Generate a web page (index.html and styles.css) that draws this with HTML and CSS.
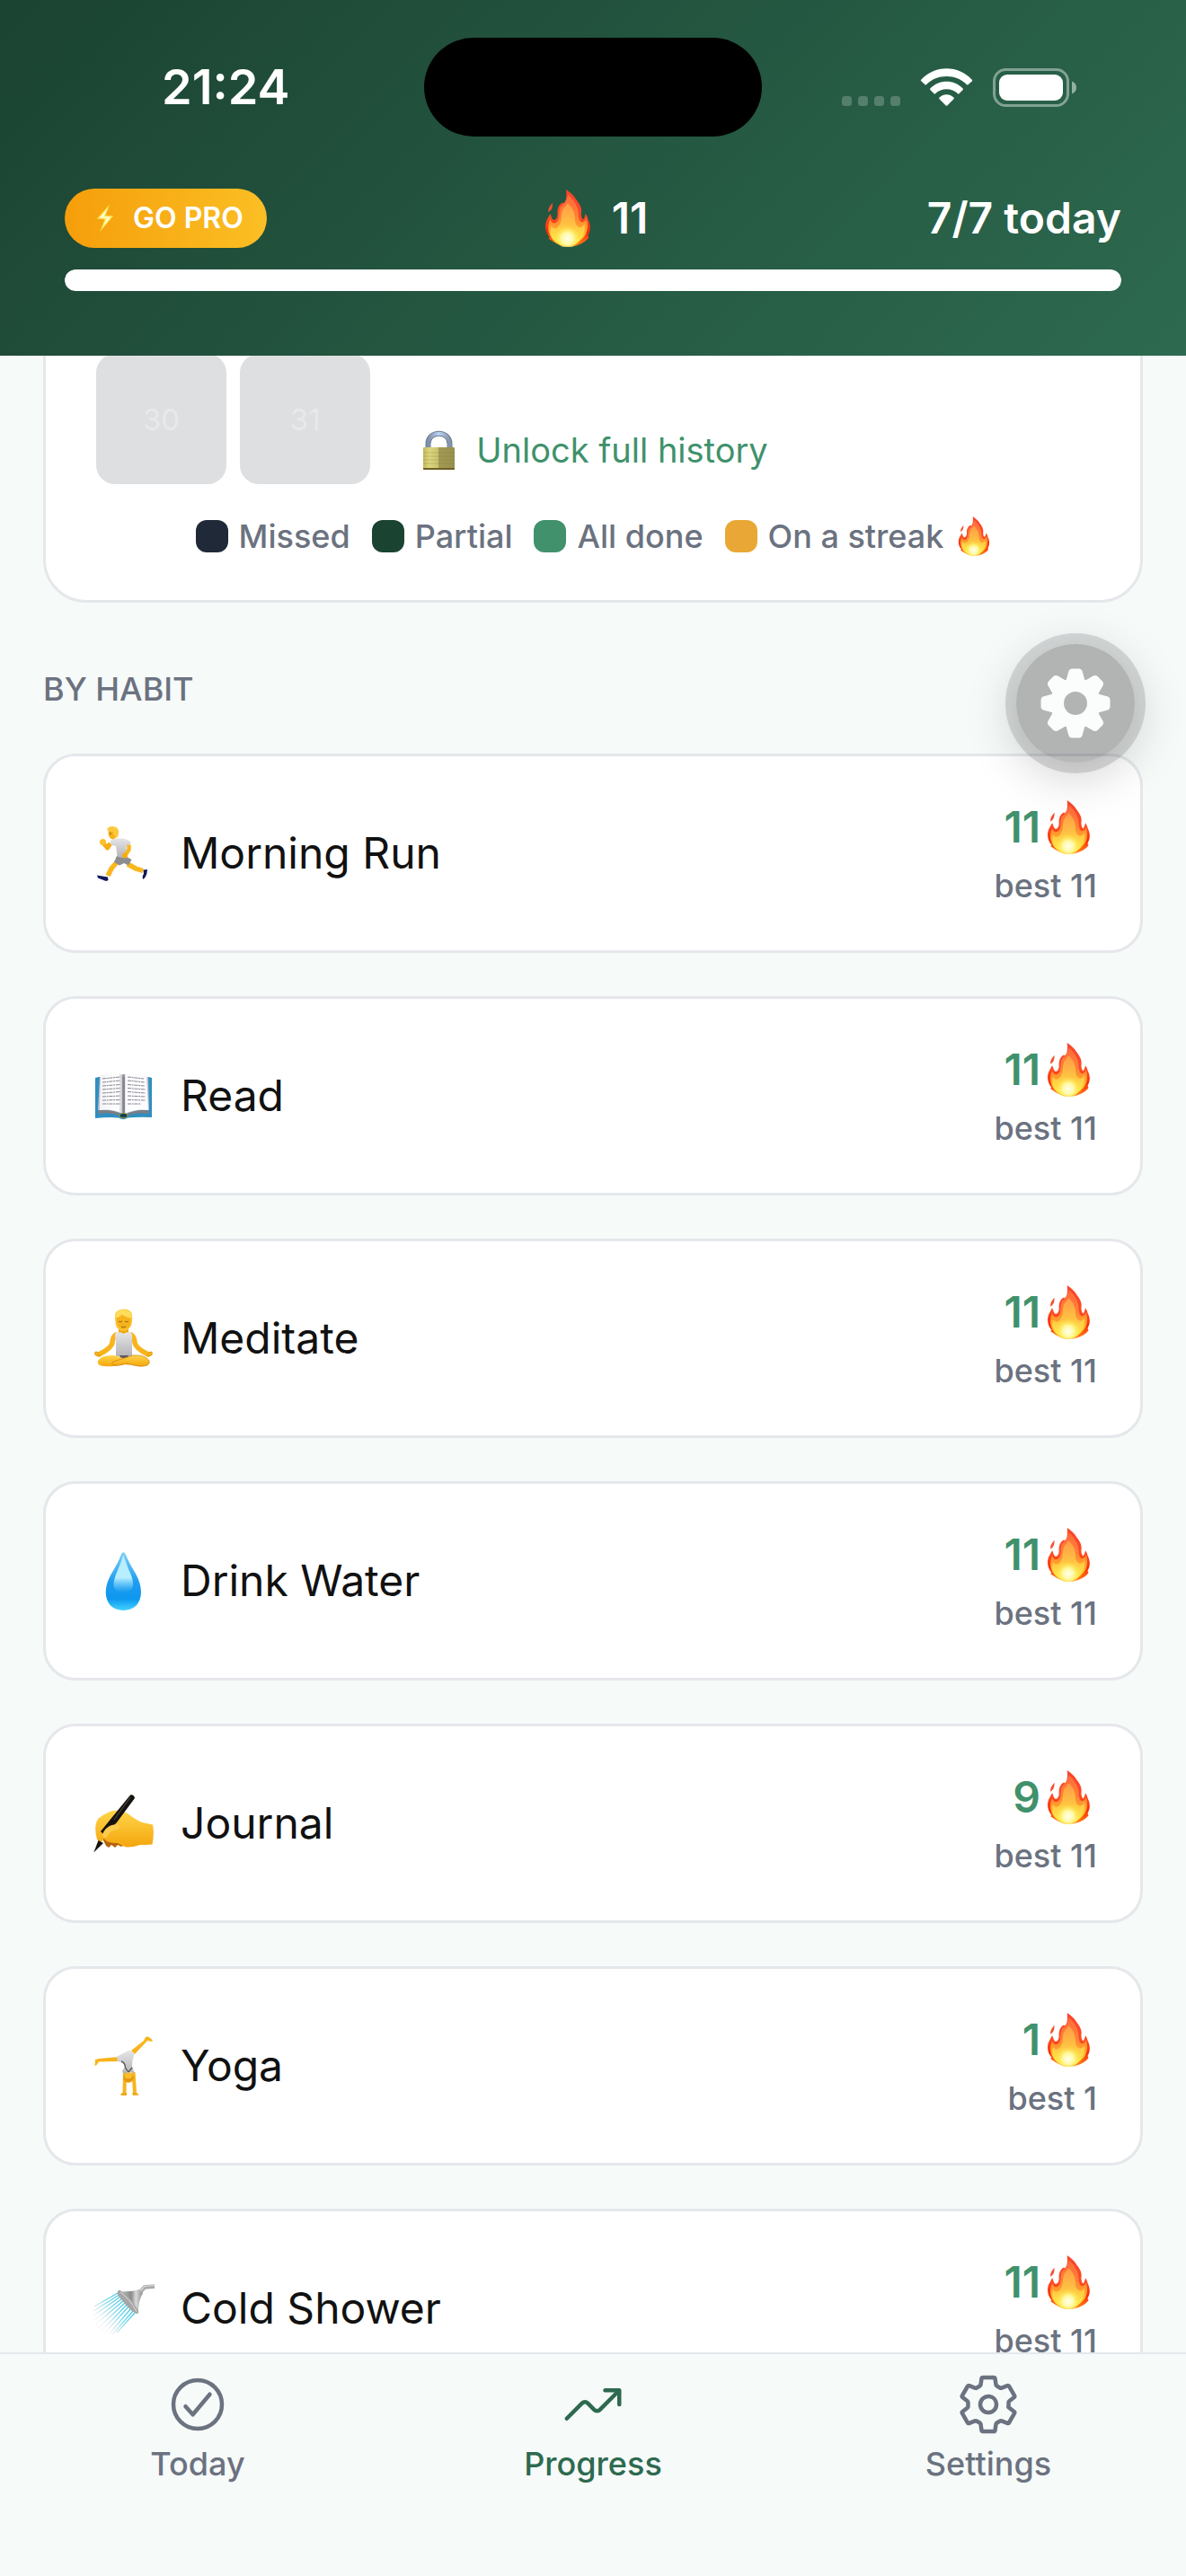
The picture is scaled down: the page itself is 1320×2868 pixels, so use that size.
FILE: index.html
```html
<!DOCTYPE html>
<html lang="en">
<head>
<meta charset="utf-8">
<meta name="viewport" content="width=device-width, initial-scale=1">
<title>Progress</title>
<link rel="stylesheet" href="styles.css">
</head>
<body>
<svg class="sprite" width="0" height="0" aria-hidden="true">
  <defs>
    <linearGradient id="flame-red" x1="0" y1="0" x2="0" y2="1">
      <stop offset="0" stop-color="#f8452c"/><stop offset=".5" stop-color="#ff4a22"/><stop offset=".75" stop-color="#fb2c08"/><stop offset="1" stop-color="#ff8a1c"/>
    </linearGradient>
    <linearGradient id="flame-orange" x1="0" y1="0" x2="0" y2="1">
      <stop offset="0" stop-color="#ff6a3d"/><stop offset=".4" stop-color="#ff7f38"/><stop offset=".65" stop-color="#ffa02a"/><stop offset="1" stop-color="#ffe52a"/>
    </linearGradient>
    <linearGradient id="flame-inner" x1="0" y1="0" x2="0" y2="1">
      <stop offset="0" stop-color="#ff9a45"/><stop offset=".5" stop-color="#ffc043"/><stop offset="1" stop-color="#fff04a"/>
    </linearGradient>
    <radialGradient id="flame-core" cx=".5" cy=".65" r=".5">
      <stop offset="0" stop-color="#fffef0"/><stop offset=".45" stop-color="#fff9a0"/><stop offset="1" stop-color="#ffe330" stop-opacity="0"/>
    </radialGradient>
    <symbol id="flame" viewBox="0 0 47 60">
      <path fill="url(#flame-red)" d="M21.700 0C26 3 30 6 32 10C35 14 38 18 37.600 23C37 27 38 30 39.300 31.500C41 30 41.500 27.500 42 25.300C44 27.500 44 29.500 45 32C47.500 37 47.500 43 44.500 48L45.500 50C43 54 37 57.500 31 59C25 60.500 18 60 12.500 57L8 54.500L3 51L4.500 50C1 46 -.5 41 .2 36C.8 31.500 3.500 29 5 25.300C6.500 27 6.200 30 8 31.500C11 33 12.500 29 12.700 26C12 20 14 16 17.300 13.700L19.500 14C22.500 11 22.200 5 21.700 0Z"/>
      <path fill="#f4502f" d="M7.700 13.700C7.200 17.500 8 20 3.300 23.700C2.600 19.500 5 16.500 7.700 13.700Z"/>
      <path fill="url(#flame-orange)" d="M23.500 5C30 11 34.500 18 34.500 25C34.500 31 36.500 35 39.500 34C41.500 33 42.500 31 42.800 30C45 37 45 46 38 52C33 57 28 59 22.500 59C16 59 9 56 5.500 49C2.500 44 2.200 38 5 31C6.500 35 9 36.500 12 34C16 30 13.500 24 15.500 19C17 15.500 22.500 14 23.500 5Z"/>
      <path fill="url(#flame-inner)" d="M23 14C29 19 31 25 31 31C31 36 33 40 37 39.500C39 39 40 37 41 36C42 44 39 51 33 55Q22 60 12 55C6 51 4 45 6 38C8 41 11 42 14 38C18 33 16 27 18 22C19 18 22 18 23 14Z"/>
      <ellipse cx="23" cy="47" rx="14" ry="14" fill="url(#flame-core)"/>
    </symbol>
    <linearGradient id="skin" x1="0" y1="0" x2="0" y2="1">
      <stop offset="0" stop-color="#ffd54a"/><stop offset="1" stop-color="#f4a60d"/>
    </linearGradient>
    <linearGradient id="shirt" x1="0" y1="0" x2="0" y2="1">
      <stop offset="0" stop-color="#e6e6e8"/><stop offset="1" stop-color="#b4b4b8"/>
    </linearGradient>
    <linearGradient id="page" x1="0" y1="0" x2="1" y2="0">
      <stop offset="0" stop-color="#f4f4f8"/><stop offset=".8" stop-color="#ffffff"/><stop offset="1" stop-color="#b9bac2"/>
    </linearGradient>
    <linearGradient id="drop" x1="0" y1="0" x2="0" y2="1">
      <stop offset="0" stop-color="#7fd0f5"/><stop offset=".5" stop-color="#1f9df0"/><stop offset=".8" stop-color="#0d97ee"/><stop offset="1" stop-color="#45d3ff"/>
    </linearGradient>
    <linearGradient id="drop-shine" x1="0" y1="0" x2="0" y2="1">
      <stop offset="0" stop-color="#b5ecff"/><stop offset=".6" stop-color="#b9efff"/><stop offset="1" stop-color="#7fd4fb" stop-opacity="0"/>
    </linearGradient>
    <linearGradient id="metal" x1="0" y1="0" x2="1" y2="0">
      <stop offset="0" stop-color="#c9c9c9"/><stop offset=".5" stop-color="#8a8a8a"/><stop offset=".7" stop-color="#dadada"/><stop offset="1" stop-color="#8f8f8f"/>
    </linearGradient>
    <linearGradient id="spray" gradientUnits="userSpaceOnUse" x1="38" y1="27" x2="10" y2="52">
      <stop offset="0" stop-color="#3cc4e0"/><stop offset=".5" stop-color="#84dced"/><stop offset="1" stop-color="#c8ccd0" stop-opacity=".15"/>
    </linearGradient>
    <linearGradient id="brass" x1="0" y1="0" x2="1" y2="0">
      <stop offset="0" stop-color="#c2b85a"/><stop offset=".2" stop-color="#dcd680"/><stop offset=".49" stop-color="#c9c26c"/><stop offset=".5" stop-color="#a39b55"/><stop offset="1" stop-color="#98904c"/>
    </linearGradient>
    <linearGradient id="shackle" x1="0" y1="0" x2="1" y2="0">
      <stop offset="0" stop-color="#7d8fa8"/><stop offset=".5" stop-color="#b9d4f5"/><stop offset="1" stop-color="#8394ab"/>
    </linearGradient>
  </defs>
</svg>

<header class="app-header">
  <div class="status-bar">
    <time class="clock">21:24</time>
    <div class="island"></div>
    <svg class="status-icons" viewBox="0 0 261 43" aria-hidden="true">
      <g fill="#fff" fill-opacity=".22">
        <rect x="0" y="31" width="11" height="11" rx="3.500"/><rect x="18" y="31" width="11" height="11" rx="3.500"/><rect x="36" y="31" width="11" height="11" rx="3.500"/><rect x="54" y="31" width="11" height="11" rx="3.500"/>
      </g>
      <g fill="#fff">
        <path d="M88 13C103-4 130-4 145 13Q145.500 13.700 145 14.300L140.500 18.300Q139.800 18.800 139 18.200C127 6 106 6 94 18.200Q93.200 18.800 92.500 18.300L88.300 14.300Q87.500 13.700 88 13Z"/>
        <path d="M98.300 22.500C108 12 125 12 134.700 22.500Q135.300 23.300 134.700 24L130.500 28.300Q129.700 29 129 28.300C122 21.500 111 21.500 104 28.300Q103.300 29 102.500 28.300L98.300 24Q97.700 23.300 98.300 22.500Z"/>
        <path d="M108.500 32.500C113 28 120 28 124.500 32.500Q125.300 33.300 124.500 34.200L117.300 41.500Q116.500 42.200 115.700 41.500L108.500 34.200Q107.700 33.300 108.500 32.500Z"/>
        <rect x="175" y="7" width="71" height="29" rx="9"/>
      </g>
      <rect x="169.500" y="1.500" width="82" height="40" rx="13" fill="none" stroke="#fff" stroke-opacity=".42" stroke-width="3"/>
      <path d="M256 14.500Q261 16.500 261 21.500T256 28.500Z" fill="#fff" fill-opacity=".5"/>
    </svg>
  </div>
  <div class="stats">
    <button class="go-pro" type="button">
      <svg class="bolt" viewBox="0 0 22 36" aria-hidden="true"><path fill="#ffe14a" stroke="#ef9a0c" stroke-width="1" stroke-opacity=".6" d="M17 1L1 19L10 19.500L4 35L21 15L12 14.500Z"/><path fill="#fffbd0" d="M14.500 6L4.500 17.500L12.500 18L8.500 28L17.500 16.500L9.500 16Z"/></svg>
      <span>GO PRO</span>
    </button>
    <p class="streak-total"><svg class="flame-lg" role="img" aria-label="Streak"><use href="#flame"/></svg><span>11</span></p>
    <p class="today-count">7/7 today</p>
  </div>
  <progress class="day-progress" value="7" max="7" aria-label="Habits done today"></progress>
</header>

<main class="content">
  <section class="calendar-card">
    <div class="calendar">
      <span class="day">30</span>
      <span class="day">31</span>
      <button class="unlock" type="button">
        <svg class="lock" viewBox="0 0 35 43" aria-hidden="true"><path fill="none" stroke="#6f7c90" stroke-width="6" d="M5.500 20V14C5.500-1 29.500-1 29.500 14V20"/><path fill="none" stroke="url(#shackle)" stroke-width="4" d="M5.500 20V14C5.500-1 29.500-1 29.500 14V20"/><rect y="18" width="35" height="25" rx="1" fill="url(#brass)"/><path stroke="#837a38" stroke-width=".6" opacity=".5" d="M0 24H35M0 28H35M0 32H35M0 36H35"/><path fill="#6d6026" d="M0 41H35V42Q35 43 34 43H1Q0 43 0 42Z"/></svg>
        <span>Unlock full history</span>
      </button>
    </div>
    <ul class="legend">
      <li><i class="swatch missed"></i>Missed</li>
      <li><i class="swatch partial"></i>Partial</li>
      <li><i class="swatch done"></i>All done</li>
      <li><i class="swatch streak"></i>On a streak <svg class="flame-sm" aria-hidden="true"><use href="#flame"/></svg></li>
    </ul>
  </section>

  <h2 class="section-title">BY HABIT</h2>

  <ul class="habits">
    <li class="habit">
      <svg class="emoji" viewBox="0 0 66 66" aria-hidden="true">
        <path fill="none" stroke="#f6ae16" stroke-width="5" stroke-linejoin="round" d="M18 22L14.500 27L9.500 21"/>
        <circle cx="9.500" cy="20.500" r="3.500" fill="#fbc02d"/>
        <path fill="none" stroke="#f9b71d" stroke-width="5.500" d="M25 43L19 50L15 58M37 45L46 50L54 52.500"/>
        <path fill="#111a5c" d="M3 57.500L15 59.500L15.500 63L13 64L4 60.500ZM54.500 51.500L59 51Q59 56 56.500 60L54 62Q53 58 55 56Z"/>
        <path fill="#8d8d91" d="M25 36L36 37L41.500 40L38 46.500L33 44L28 46.500L22 43Z"/>
        <path fill="url(#shirt)" d="M17.500 19L24 16.500Q34 15 41 20.500L38 26L35.500 25L36 37Q30 39 25.500 36.500L24 25L19 24Z"/>
        <path fill="none" stroke="#f9b71d" stroke-width="4.500" stroke-linejoin="round" d="M38.500 23.500L38.500 29L34.500 35"/>
        <circle cx="34" cy="35.500" r="3" fill="#f5ab12"/>
        <path fill="#f7b01a" d="M15.500 8Q15 16 20 17.500Q24 17.500 24.500 12L22 6Z"/>
        <path fill="#fbc940" d="M14 7Q15 2.500 21 3Q28 4 27 11Q26.500 15 24.500 16Q23.500 13 21.500 12.500L21 9Q17 9.500 14 7Z"/>
        <circle cx="18" cy="11" r=".8" fill="#6b4a10"/>
      </svg>
      <span class="habit-name">Morning Run</span>
      <div class="habit-score"><strong>11<svg class="flame-md" role="img" aria-label="day streak"><use href="#flame"/></svg></strong><small>best 11</small></div>
    </li>
    <li class="habit">
      <svg class="emoji" viewBox="0 0 66 66" aria-hidden="true">
        <path fill="#2f8fc0" d="M1 13L5 12H60L64 13V57Q48 56.500 37 57.500Q32.500 61 27 57.500Q16 56.500 1 58Z"/>
        <path fill="#7d7d84" d="M4 50Q18 46 28 53L32.500 55L37 53Q48 47 61 50V53Q46 51 38 55H27Q18 51 4 53Z"/>
        <path fill="#c3c4cb" d="M4 49L6 12H60L61 49Q46 48 33 54Q20 48 4 49Z"/>
        <path fill="url(#page)" d="M7 10Q20 6.500 28 8.500L32 10V53Q20 47 6 49Z"/>
        <path fill="#fcfcff" d="M34 10Q40 6.500 58 10L60 49Q46 47 34 53Z"/>
        <path stroke="#5d5d66" stroke-width="3" opacity=".6" d="M32.700 9V53"/>
        <g stroke="#85858e" stroke-width="1" stroke-dasharray="4 .7 2 .7"><path d="M9 14L29 12M9 18L29 16M9 22L29 20.500M9 26L29 24.500M9 30L29 28.500M9 34L29 33M9 38L29 37.500M9 42L29 42"/><path d="M37 12L55 14M37 16L56 18M37 20.500L56 22M37 24.500L57 26M37 28.500L57 30M37 33L57 34M37 37.500L57 38M37 42L52 42"/></g>
        <ellipse cx="32.500" cy="55" rx="4.500" ry="2.500" fill="#0d4257" stroke="#a79a35" stroke-width="1"/>
      </svg>
      <span class="habit-name">Read</span>
      <div class="habit-score"><strong>11<svg class="flame-md" role="img" aria-label="day streak"><use href="#flame"/></svg></strong><small>best 11</small></div>
    </li>
    <li class="habit">
      <svg class="emoji" viewBox="0 0 66 66" aria-hidden="true">
        <path fill="#eba80f" d="M27 18H38V28H27Z"/>
        <path fill="none" stroke="#f7b41c" stroke-width="5.500" stroke-linecap="round" d="M24 29Q20 32 20 38Q19 44 5 51M41 29Q45 32 45 38Q46 44 60 51"/>
        <path fill="none" stroke="#eba50f" stroke-width="1.800" d="M7 52Q1 53 1 50T5 50M58 52Q64 53 64 50T60 50"/>
        <path fill="url(#shirt)" d="M24 26Q28 27 29 26Q32.500 29 36 26Q37 27 41 26Q43 30 42 35V53H24V35Q22 30 24 26Z"/>
        <path fill="#5c5c60" d="M28 52H38L36 60H30Z"/>
        <path fill="url(#skin)" d="M4 58Q8 51 22 52L45 59Q45 64 34 62Q14 66 6 63Q3 61 4 58Z"/>
        <path fill="url(#skin)" stroke="#c97c08" stroke-width=".7" d="M61 58Q57 51 43 52L21 59Q18 62 22 63Q26 64 36 61Q52 66 59 63Q62 61 61 58Z"/>
        <path fill="#fcc530" d="M23 11Q22 3 28 1.500Q35 -1 40 3Q43 6 42 14L41 19Q37 25 32 25Q26 24 24 19Z"/>
        <path fill="#f4b21d" d="M25 10Q30 9 31 7Q35 10 40.500 11V16Q39 22 32.500 23Q27 22 25 16Z"/>
        <path fill="#ffdc5c" d="M23 10Q24 1 33 1Q41 2 42 10Q35 10 30 6Q29 10 23 10Z"/>
        <path fill="none" stroke="#97680b" stroke-width="1" d="M27 14Q29 15.500 31 14M34 14Q36 15.500 38 14M30 20Q32.500 21.500 35 20"/>
      </svg>
      <span class="habit-name">Meditate</span>
      <div class="habit-score"><strong>11<svg class="flame-md" role="img" aria-label="day streak"><use href="#flame"/></svg></strong><small>best 11</small></div>
    </li>
    <li class="habit">
      <svg class="emoji" viewBox="0 0 66 66" aria-hidden="true">
        <path fill="url(#drop)" d="M32.300 1.300Q34 1.300 35 4Q38 12 46 25Q52 36 52 46Q51 65 32.300 66Q13.600 65 12.700 46Q12.700 36 19 25Q27 12 29.700 4Q30.600 1.300 32.300 1.300Z"/>
        <path fill="url(#drop-shine)" d="M32.300 4Q35 12 38 20Q44 32 43 39Q41 46 32.300 46Q23 46 21.500 39Q21 32 26.500 20Q30 12 32.300 4Z"/>
      </svg>
      <span class="habit-name">Drink Water</span>
      <div class="habit-score"><strong>11<svg class="flame-md" role="img" aria-label="day streak"><use href="#flame"/></svg></strong><small>best 11</small></div>
    </li>
    <li class="habit">
      <svg class="emoji" viewBox="0 0 66 66" aria-hidden="true">
        <path fill="#b5640c" d="M9 50L13 58L16 60L19 57L23 60L26 57L30 59L36 56L28 46Z"/>
        <path fill="url(#skin)" d="M3 51Q-1 36 4 28Q15 19 24 18.500Q32 19 37 22Q46 29 53 32L65 34.500Q67 44 64.500 56.500Q56 57 51 57Q42 60 36 59.500Q30 58 26 55Q18 55 14 53L10 50Q9 54 6 54Z"/>
        <path fill="#d98a0c" opacity=".55" d="M8 43L13 37L22 36L11 47Z"/>
        <path fill="#16130f" d="M40 1.500Q44 .5 45 5L25 32L22 35Q17 35 15 38L10 45L7 42Z"/>
        <path fill="#16130f" d="M4.500 52L10 55L-.7 65.500Z"/>
        <path fill="none" stroke="#fdcb4b" stroke-width="6" stroke-linecap="round" d="M12 46Q15 38 25 37"/>
        <path stroke="#666" stroke-width=".8" d="M40 4L22 29"/>
      </svg>
      <span class="habit-name">Journal</span>
      <div class="habit-score"><strong>9<svg class="flame-md" role="img" aria-label="day streak"><use href="#flame"/></svg></strong><small>best 11</small></div>
    </li>
    <li class="habit">
      <svg class="emoji" viewBox="0 0 66 66" aria-hidden="true">
        <path fill="#f7b41c" d="M27 23L5 25L1 26L.5 33L2.500 32L5 28.500L27 28ZM41 16L55 5L57 1L60 .5L64.500 4V6L59 5L45 20Z"/>
        <path fill="none" stroke="#f7b41c" stroke-width="4" d="M34 40L33.500 63M43.500 40L45 63"/>
        <path fill="#eea912" d="M29 65L31 63H36V66H30ZM42 63H47L50 65.500L43 66Z"/>
        <path fill="url(#shirt)" d="M24.500 23L38 16Q42 16 44.500 20Q42 27 42 33L44.500 41L38 40L32 42L31 39L34 34Q33 29 26 28Z"/>
        <path fill="none" stroke="#555" stroke-width="1.300" d="M30 28Q34 29 34.500 35L38 40L42 35"/>
        <circle cx="38" cy="46" r="5.800" fill="#e39a0e"/>
        <path fill="#f9bd2e" d="M33 43Q38 38 43 43L41 47H35Z"/>
      </svg>
      <span class="habit-name">Yoga</span>
      <div class="habit-score"><strong>1<svg class="flame-md" role="img" aria-label="day streak"><use href="#flame"/></svg></strong><small>best 1</small></div>
    </li>
    <li class="habit">
      <svg class="emoji" viewBox="0 0 66 66" aria-hidden="true">
        <path fill="none" stroke="url(#spray)" stroke-width="1.300" d="M26 16L0 31M27.500 18L-1 36M29 20L-1 41M31 22L0 46M33 24L1 51M35 26L4 55M37 28L8 58M39 30L12 60M41 33L16 62M43 36L20 62M45 38L25 60"/>
        <path fill="none" stroke="#a9a9a9" stroke-width="4.500" d="M49 17L56 9.500L67 8.500"/>
        <path fill="none" stroke="#dedede" stroke-width="1.200" d="M50 15L56 8.500L67 7.500"/>
        <path fill="url(#metal)" d="M28 14Q40 15 50 12L54 16Q49 25 49 36L45 35L28 18Z"/>
        <path fill="#a6a6a6" d="M26 14Q28 11 30 14Q42 22 49 36Q50 39 47 39Q43 38 35 29L26.500 19Q25 16 26 14Z"/>
        <path fill="none" stroke="#dcdcdc" stroke-width="1" d="M29 15Q41 24 47 37"/>
      </svg>
      <span class="habit-name">Cold Shower</span>
      <div class="habit-score"><strong>11<svg class="flame-md" role="img" aria-label="day streak"><use href="#flame"/></svg></strong><small>best 11</small></div>
    </li>
  </ul>
</main>

<button class="fab" type="button" aria-label="Tools">
  <svg viewBox="-39 -39 78 78" aria-hidden="true">
    <defs><path id="tooth" d="M-10.500-25L-7.800-35Q-7-38.500-3.500-38.500H3.500Q7-38.500 7.800-35L10.500-25Z"/></defs>
    <circle r="20.500" fill="none" stroke="#fbfdfc" stroke-width="15"/>
    <g fill="#fbfdfc"><use href="#tooth"/><use href="#tooth" transform="rotate(45)"/><use href="#tooth" transform="rotate(90)"/><use href="#tooth" transform="rotate(135)"/><use href="#tooth" transform="rotate(180)"/><use href="#tooth" transform="rotate(225)"/><use href="#tooth" transform="rotate(270)"/><use href="#tooth" transform="rotate(315)"/></g>
  </svg>
</button>

<nav class="tabs">
  <a class="tab" href="#today">
    <svg viewBox="0 0 512 512" aria-hidden="true"><path d="M448 256c0-106-86-192-192-192S64 150 64 256s86 192 192 192 192-86 192-192z"/><path d="M352 176L217.600 336 160 272"/></svg>
    Today
  </a>
  <a class="tab active" href="#progress" aria-current="page">
    <svg viewBox="0 0 512 512" aria-hidden="true"><path d="M352 144h112v112"/><path d="M48 368l121.370-121.370a32 32 0 0145.260 0l50.740 50.740a32 32 0 0045.260 0L448 160"/></svg>
    Progress
  </a>
  <a class="tab" href="#settings">
    <svg viewBox="0 0 512 512" aria-hidden="true"><path d="M262.290 192.310a64 64 0 1057.400 57.400 64.130 64.130 0 00-57.400-57.400zM416.390 256a154.340 154.340 0 01-1.530 20.790l45.210 35.460a10.810 10.810 0 012.450 13.750l-42.770 74a10.810 10.810 0 01-13.140 4.590l-44.900-18.080a16.110 16.110 0 00-15.170 1.750A164.480 164.480 0 01325 400.800a15.940 15.940 0 00-8.820 12.140l-6.730 47.890a11.080 11.080 0 01-10.680 9.170h-85.540a11.110 11.110 0 01-10.690-8.870l-6.720-47.820a16.070 16.070 0 00-9-12.220 155.300 155.300 0 01-21.460-12.570 16 16 0 00-15.110-1.710l-44.890 18.070a10.810 10.810 0 01-13.140-4.580l-42.770-74a10.800 10.800 0 012.450-13.750l38.210-30a16.050 16.050 0 006-14.080c-.36-4.170-.58-8.330-.58-12.500s.21-8.270.58-12.350a16 16 0 00-6.070-13.940l-38.190-30A10.810 10.810 0 0149.480 186l42.770-74a10.810 10.810 0 0113.140-4.590l44.900 18.080a16.110 16.110 0 0015.170-1.750A164.480 164.480 0 01187 111.200a15.940 15.940 0 008.820-12.140l6.730-47.890A11.080 11.080 0 01213.230 42h85.540a11.110 11.110 0 0110.690 8.870l6.720 47.820a16.070 16.070 0 009 12.220 155.300 155.300 0 0121.460 12.570 16 16 0 0015.110 1.710l44.890-18.070a10.810 10.810 0 0113.140 4.580l42.770 74a10.800 10.800 0 01-2.450 13.750l-38.210 30a16.050 16.050 0 00-6.050 14.080c.33 4.140.55 8.300.55 12.470z"/></svg>
    Settings
  </a>
</nav>
</body>
</html>
```
FILE: styles.css
```css
:root {
  --page: #f6faf9;
  --line: #e5e7eb;
  --muted: #6b7280;
  --green: #40916c;
  --green-deep: #2d6a4f;
  --green-dark: #1b4332;
}

* { box-sizing: border-box; }

body {
  margin: 0;
  height: 100vh;
  display: flex;
  flex-direction: column;
  overflow: hidden;
  background: var(--page);
  color: #111;
  font-family: Inter, "Liberation Sans", sans-serif;
}

p, h2, ul { margin: 0; padding: 0; }
ul { list-style: none; }
button { border: 0; padding: 0; font: inherit; cursor: pointer; }
svg { display: block; flex: none; overflow: visible; }
.sprite { position: absolute; }

/* Header */
.app-header {
  flex: none;
  padding: 42px 72px 72px;
  background: linear-gradient(135deg, var(--green-dark), var(--green-deep));
  color: #fff;
}

.status-bar {
  display: grid;
  grid-template-columns: 1fr auto 1fr;
  align-items: center;
}
.clock { padding-left: 108px; font-size: 54px; font-weight: 600; line-height: 60px; }
.island { width: 376px; height: 110px; border-radius: 55px; background: #000; }
.status-icons { width: 261px; height: 43px; margin-right: 50px; justify-self: end; }

.stats {
  display: grid;
  grid-template-columns: 1fr auto 1fr;
  align-items: center;
  margin-top: 58px;
  font-size: 48px;
  font-weight: 600;
  line-height: 66px;
}
.go-pro {
  display: flex;
  align-items: center;
  gap: 20px;
  justify-self: start;
  height: 66px;
  padding: 0 26px 0 34px;
  border-radius: 33px;
  background: linear-gradient(90deg, #f59e0b, #fbbf24);
  color: #fff;
  font-size: 32px;
  font-weight: 600;
}
.bolt { width: 22px; height: 36px; }
.streak-total { display: flex; align-items: center; gap: 24px; padding-left: 8px; }
.flame-lg { width: 50px; height: 64px; }
.today-count { text-align: right; }

.day-progress {
  display: block;
  width: 100%;
  height: 24px;
  margin-top: 24px;
  border: 0;
  border-radius: 12px;
  overflow: hidden;
  appearance: none;
  background: rgba(255, 255, 255, .2);
}
.day-progress::-webkit-progress-bar { background: transparent; }
.day-progress::-webkit-progress-value { background: #fff; border-radius: 12px; }

/* Scrolled content */
.content {
  flex: 1;
  min-height: 0;
  overflow: hidden;
  padding: 0 48px;
}

.calendar-card {
  margin-top: -61px;
  padding: 56px 56px 49px;
  border: 3px solid var(--line);
  border-radius: 48px;
  background: #fff;
}
.calendar {
  position: relative;
  display: grid;
  grid-template-columns: repeat(7, 1fr);
  gap: 15px;
}
.day {
  display: grid;
  place-items: center;
  aspect-ratio: 1;
  border-radius: 21px;
  background: #dedfe1;
  color: #e8e9eb;
  font-size: 33px;
}
.unlock {
  position: absolute;
  inset: auto 0 14px;
  display: flex;
  justify-content: center;
  align-items: center;
  gap: 24px;
  width: max-content;
  margin: 0 auto;
  padding-left: 6px;
  background: none;
  color: var(--green);
  font-size: 38px;
  line-height: 48px;
}
.lock { width: 35px; height: 43px; }

.legend {
  display: flex;
  justify-content: center;
  gap: 24px;
  margin-top: 36px;
  color: var(--muted);
  font-size: 36px;
  font-weight: 500;
  line-height: 44px;
}
.legend li { display: flex; align-items: center; gap: 12px; }
.swatch { width: 36px; height: 36px; border-radius: 12px; }
.missed { background: #1f2937; }
.partial { background: var(--green-dark); }
.done { background: var(--green); }
.streak { background: #e9a835; }
.flame-sm { width: 36px; height: 44px; margin-left: 4px; }

.section-title {
  margin: 72px 0 48px;
  color: var(--muted);
  font-size: 36px;
  font-weight: 500;
  line-height: 48px;
}

.habits { display: grid; gap: 48px; }
.habit {
  display: flex;
  align-items: center;
  gap: 30px;
  padding: 43px 48px 43px 54px;
  border: 3px solid var(--line);
  border-radius: 36px;
  background: #fff;
}
.emoji { width: 66px; height: 66px; }
.habit-name { flex: 1; font-size: 48px; line-height: 60px; }
.habit-score { text-align: right; }
.habit-score strong {
  display: flex;
  align-items: center;
  justify-content: flex-end;
  gap: 8px;
  padding-right: 8px;
  color: var(--green);
  font-size: 48px;
  font-weight: 600;
  line-height: 72px;
}
.habit-score small {
  display: block;
  color: var(--muted);
  font-size: 36px;
  font-weight: 500;
  line-height: 58px;
}
.flame-md { width: 47px; height: 60px; }

/* Floating tools button */
.fab {
  position: fixed;
  top: 717px;
  right: 57px;
  display: grid;
  place-items: center;
  width: 132px;
  height: 132px;
  border-radius: 50%;
  background: rgba(0, 0, 0, .28);
  box-shadow: 0 0 0 12px rgba(0, 0, 0, .13), 0 12px 54px 4px rgba(0, 0, 0, .18);
}
.fab svg { width: 78px; height: 78px; }

/* Bottom tabs */
.tabs {
  flex: none;
  display: grid;
  grid-template-columns: repeat(3, 1fr);
  padding: 20px 0 103px;
  border-top: 2px solid var(--line);
  background: var(--page);
}
.tab {
  display: grid;
  justify-items: center;
  gap: 8px;
  color: var(--muted);
  font-size: 36px;
  font-weight: 500;
  line-height: 44px;
  text-decoration: none;
}
.tab svg {
  width: 72px;
  height: 72px;
  fill: none;
  stroke: currentColor;
  stroke-width: 32;
  stroke-linecap: round;
  stroke-linejoin: round;
}
.tab.active { color: var(--green-deep); }
```
